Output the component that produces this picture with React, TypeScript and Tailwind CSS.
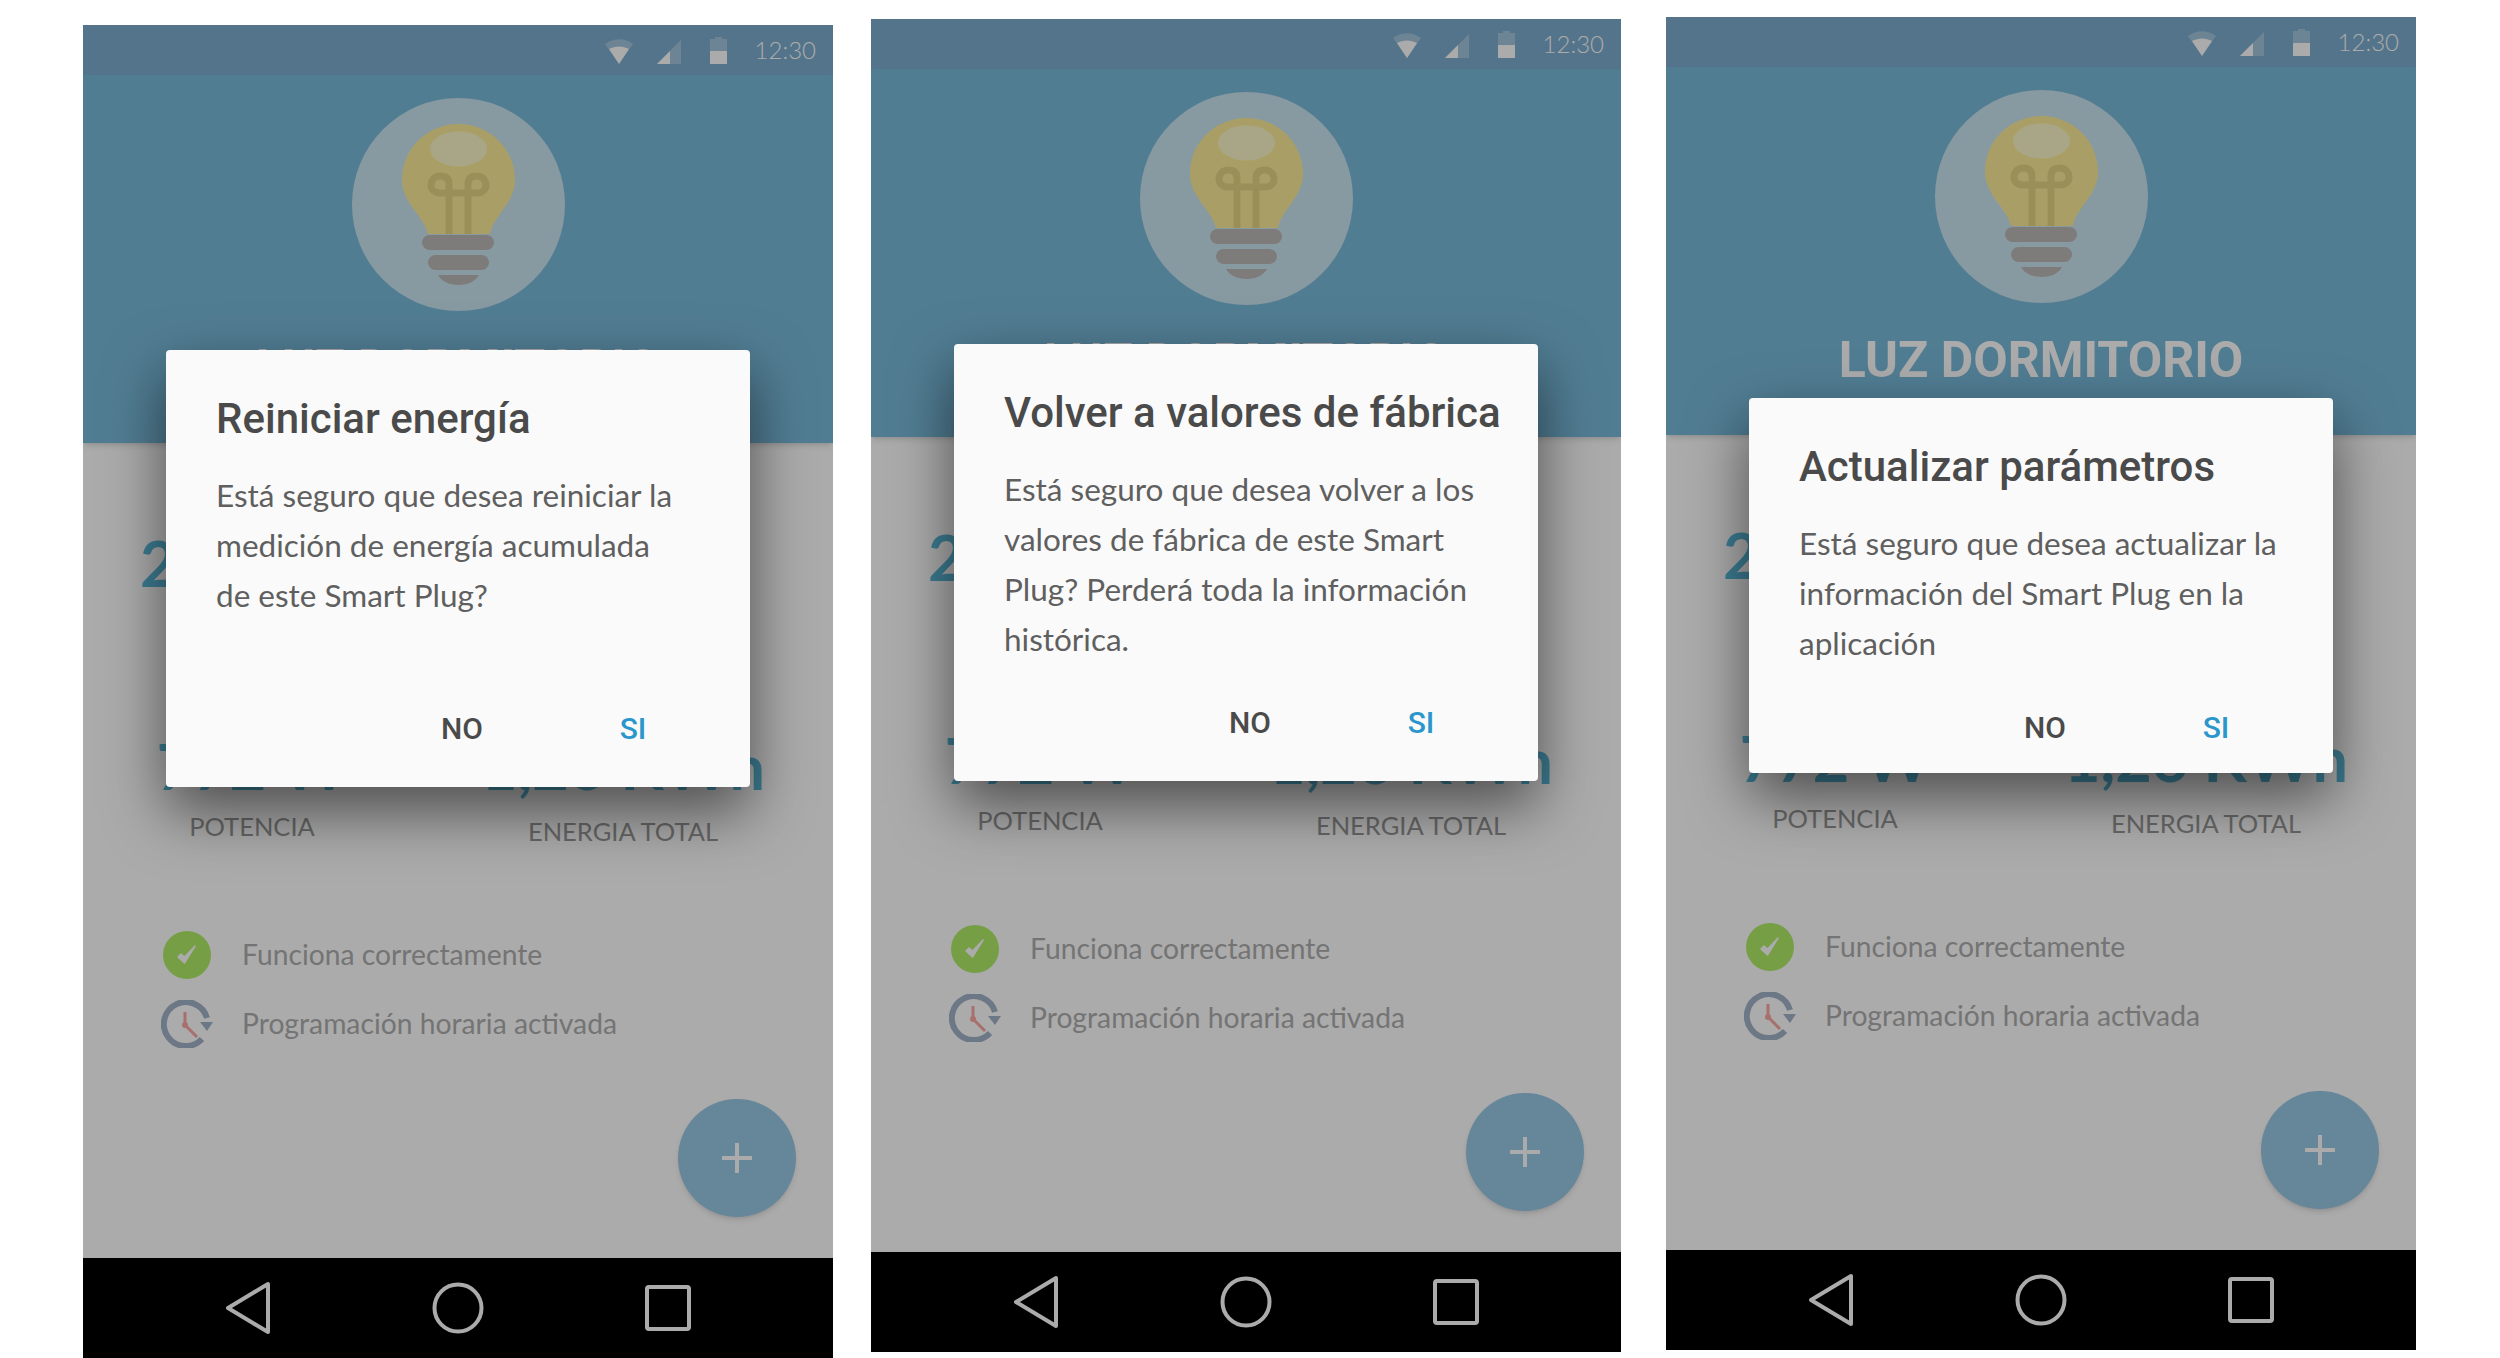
type Screen = {
  title: string;
  lines: string[];
  phoneClass: string;
  dialogClass: string;
  footerClass: string;
};

const screens: Screen[] = [
  {
    title: "Reiniciar energía",
    lines: ["Está seguro que desea reiniciar la", "medición de energía acumulada", "de este Smart Plug?"],
    phoneClass: "ml-[83px] mt-[25px]",
    dialogClass: "top-[325px] h-[437px]",
    footerClass: "pb-[38px]",
  },
  {
    title: "Volver a valores de fábrica",
    lines: ["Está seguro que desea volver a los", "valores de fábrica de este Smart", "Plug? Perderá toda la información", "histórica."],
    phoneClass: "ml-[38px] mt-[19px]",
    dialogClass: "top-[325px] h-[437px]",
    footerClass: "pb-[38px]",
  },
  {
    title: "Actualizar parámetros",
    lines: ["Está seguro que desea actualizar la", "información del Smart Plug en la", "aplicación"],
    phoneClass: "ml-[45px] mt-[17px]",
    dialogClass: "top-[381px] h-[375px]",
    footerClass: "pb-[25px]",
  },
];

function StatusIcons() {
  return (
    <div className="flex items-center justify-end h-[50px] pr-[17px] bg-[#7cadce] font-['Lato',sans-serif]">
      <svg width="28" height="25" viewBox="0 0 28 25" className="mt-[3px]">
        <path d="M14 25 L0 5 C8 -1.500 20 -1.500 28 5 Z" fill="#ffffff" fillOpacity="0.3" />
        <path d="M14 25 L4 10 C10 6.500 18 6.500 24 10 Z" fill="#ffffff" />
      </svg>
      <svg width="24" height="24" viewBox="0 0 24 24" className="ml-[24px] mt-[3px]">
        <path d="M0 24 L24 0 V24 Z" fill="#ffffff" fillOpacity="0.3" />
        <path d="M0 24 L13 11 V24 Z" fill="#ffffff" />
      </svg>
      <svg width="17" height="27" viewBox="0 0 17 27" className="ml-[29px]">
        <path d="M5 0 H12 V2 H17 V27 H0 V2 H5 Z" fill="#ffffff" fillOpacity="0.3" />
        <path d="M0 14 H17 V27 H0 Z" fill="#ffffff" />
      </svg>
      <span className="ml-[28px] text-[24px] leading-[28px] font-light text-white">12:30</span>
    </div>
  );
}

function Bulb() {
  return (
    <svg width="213" height="213" viewBox="0 0 213 213" className="block rounded-full bg-white/60 mx-auto mt-[23px]">
      <path d="M76 136 C72 118 50 105 50 82 C50 50 76 26 106.500 26 C137 26 163 50 163 82 C163 105 141 118 138 136 Z" fill="#fcee98" />
      <ellipse cx="106.500" cy="51" rx="28.500" ry="17.500" fill="#fcf8c9" />
      <path
        d="M97 136 V86 C97 79 92 78 88 78 C83 78 79 82 79 87 C79 92 83 95 88 95 H125 C130 95 134 92 134 87 C134 82 130 78 125 78 C121 78 116 79 116 86 V136"
        fill="none"
        stroke="#e6d584"
        strokeWidth="7"
      />
      <rect x="70" y="137" width="72" height="15" rx="7.500" fill="#bdb8b8" />
      <rect x="76" y="157" width="61" height="15" rx="7.500" fill="#bdb8b8" />
      <path d="M86 177 H127 C124 183 116 187 106.500 187 C97 187 89 183 86 177 Z" fill="#bdb8b8" />
    </svg>
  );
}

function CheckIcon() {
  return (
    <svg width="48" height="48" viewBox="0 0 48 48" className="shrink-0 ml-[80px]">
      <circle cx="24" cy="24" r="24" fill="#b0ec68" />
      <path d="M15 26 L21.500 32 L32 15 L21.500 26 L18 23 Z" fill="#ffffff" stroke="#ffffff" strokeWidth="1.500" strokeLinejoin="round" />
    </svg>
  );
}

function ClockIcon() {
  return (
    <svg width="52" height="48" viewBox="0 0 52 48" className="shrink-0 ml-[78px]">
      <path d="M41 39 A22 22 0 1 1 46 18" fill="none" stroke="#a2b3c8" strokeWidth="6" />
      <path d="M39 22 H52 L46 31 Z" fill="#a2b3c8" />
      <path d="M24 12 V25 L36 37" fill="none" stroke="#fba7a3" strokeWidth="3" />
      <circle cx="24" cy="25" r="3" fill="#fba7a3" />
    </svg>
  );
}

function NavBar() {
  return (
    <div className="flex items-center justify-center gap-[150px] h-[100px] bg-black">
      <svg width="60" height="54" viewBox="0 0 60 54">
        <path d="M10 27 L50 3 V51 Z" fill="none" stroke="#ffffff" strokeWidth="4" strokeLinejoin="round" />
      </svg>
      <svg width="60" height="54" viewBox="0 0 60 54">
        <circle cx="30" cy="27" r="23.500" fill="none" stroke="#ffffff" strokeWidth="4" />
      </svg>
      <svg width="60" height="54" viewBox="0 0 60 54">
        <rect x="9" y="6" width="42" height="42" rx="2" fill="none" stroke="#ffffff" strokeWidth="4" />
      </svg>
    </div>
  );
}

function Phone({ screen }: { screen: Screen }) {
  return (
    <div className={`relative w-[750px] h-[1333px] shrink-0 overflow-hidden bg-white flex flex-col ${screen.phoneClass}`}>
      <StatusIcons />

      {/* Header with the bulb */}
      <div className="relative h-[368px] shrink-0 bg-[#7abbdb] shadow-md">
        <Bulb />
        <h1 className="mt-[33px] text-center text-[50px] leading-[48px] font-bold text-white font-['Roboto',sans-serif]">
          LUZ DORMITORIO
        </h1>
      </div>

      {/* Readings */}
      <div className="flex-1 font-['Lato',sans-serif]">
        <div className="mt-[80px] pl-[57px] h-[80px] text-[63px] leading-[80px] font-bold text-[#5bbbdb]">220 V</div>
        <div className="mt-[123px] grid grid-cols-[338px_404px]">
          <div className="text-center">
            <div className="h-[80px] text-[63px] leading-[80px] font-bold text-[#5bbbdb]">772 W</div>
            <div className="h-[40px] text-[25.500px] leading-[40px] text-[#999999]">POTENCIA</div>
          </div>
          <div className="text-center">
            <div className="h-[80px] text-[63px] leading-[80px] font-bold text-[#5bbbdb]">1,26 KWh</div>
            <div className="mt-[5px] h-[40px] text-[25.500px] leading-[40px] text-[#999999]">ENERGIA TOTAL</div>
          </div>
        </div>
        <div className="mt-[80px] flex flex-col gap-[21px] text-[28.250px] text-[#aeaeae]">
          <div className="flex items-center h-[48px]">
            <CheckIcon />
            <span className="ml-[31px] pb-[2px]">Funciona correctamente</span>
          </div>
          <div className="flex items-center h-[48px]">
            <ClockIcon />
            <span className="ml-[29px] pb-[2px]">Programación horaria activada</span>
          </div>
        </div>
      </div>

      <NavBar />

      {/* FAB */}
      <div className="absolute right-[37px] bottom-[141px] w-[118px] h-[118px] rounded-full bg-[#98c8e6] shadow-md flex items-center justify-center">
        <svg width="30" height="30" viewBox="0 0 30 30">
          <path d="M15 0 V30 M0 15 H30" stroke="#ffffff" strokeWidth="4" />
        </svg>
      </div>

      {/* Scrim */}
      <div className="absolute inset-0 bg-black/[.33]" />

      {/* Dialog */}
      <div
        className={`absolute left-[83px] w-[584px] flex flex-col rounded-[4px] bg-[#fafafa] shadow-[0_24px_60px_rgba(0,0,0,0.55)] ${screen.dialogClass}`}
      >
        <h2 className="mt-[44px] pl-[50px] h-[50px] text-[42px] leading-[50px] font-medium text-[#4a4a4a] font-['Roboto',sans-serif] whitespace-nowrap">
          {screen.title}
        </h2>
        <div className="mt-[26px] pl-[50px] text-[31.500px] leading-[50px] text-[#5f5f5f] font-['Lato',sans-serif]">
          {screen.lines.map((line) => (
            <div key={line} className="whitespace-nowrap">{line}</div>
          ))}
        </div>
        <div className={`mt-auto flex text-[30px] leading-[40px] font-medium font-['Roboto',sans-serif] ${screen.footerClass}`}>
          <span className="w-[60px] ml-[266px] text-center text-[#4a4a4a]">NO</span>
          <span className="w-[60px] ml-[111px] text-center text-[#2a96cb]">SI</span>
        </div>
      </div>
    </div>
  );
}

export default function App() {
  return (
    <div className="w-[2500px] h-[1358px] overflow-hidden bg-white flex items-start">
      {screens.map((screen) => (
        <Phone key={screen.title} screen={screen} />
      ))}
    </div>
  );
}
